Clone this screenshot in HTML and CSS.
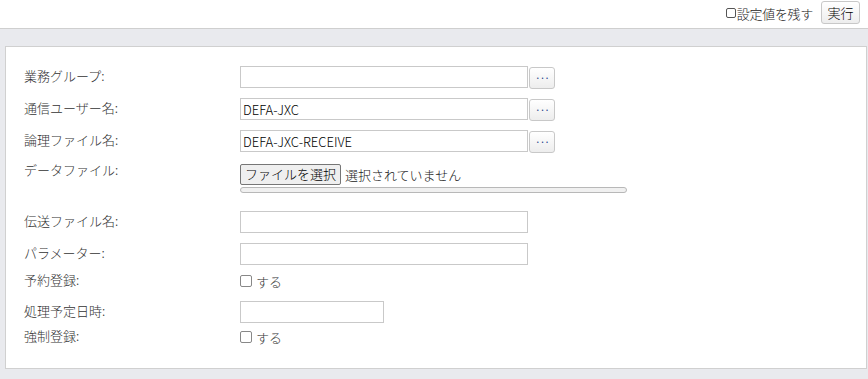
FILE: index.html
```html
<!DOCTYPE html>
<html lang="ja">
<head>
<meta charset="utf-8">
<link rel="stylesheet" href="styles.css">
</head>
<body>
<div class="topbar">
  <label class="keep"><input type="checkbox" class="cb-small">設定値を残す</label>
  <button class="btn run">実行</button>
</div>
<div class="main">
  <div class="panel">
    <div class="row">
      <div class="label">業務グループ:</div>
      <div class="field"><input class="text wide" type="text" value=""><button class="btn dots">···</button></div>
    </div>
    <div class="row">
      <div class="label">通信ユーザー名:</div>
      <div class="field"><input class="text wide" type="text" value="DEFA-JXC"><button class="btn dots">···</button></div>
    </div>
    <div class="row">
      <div class="label">論理ファイル名:</div>
      <div class="field"><input class="text wide" type="text" value="DEFA-JXC-RECEIVE"><button class="btn dots">···</button></div>
    </div>
    <div class="row file-row">
      <div class="label">データファイル:</div>
      <div class="filefield">
        <div class="fileline"><span class="filebtn">ファイルを選択</span><span class="filename">選択されていません</span></div>
        <div class="progress"></div>
      </div>
    </div>
    <div class="row">
      <div class="label">伝送ファイル名:</div>
      <div class="field"><input class="text wide" type="text" value=""></div>
    </div>
    <div class="row r6">
      <div class="label">パラメーター:</div>
      <div class="field"><input class="text wide" type="text" value=""></div>
    </div>
    <div class="row check-row">
      <div class="label">予約登録:</div>
      <label class="check"><input type="checkbox" class="cb">する</label>
    </div>
    <div class="row r8">
      <div class="label">処理予定日時:</div>
      <div class="field"><input class="text short" type="text" value=""></div>
    </div>
    <div class="row check-row last">
      <div class="label">強制登録:</div>
      <label class="check"><input type="checkbox" class="cb">する</label>
    </div>
  </div>
</div>
</body>
</html>
```
FILE: styles.css
```css
* { box-sizing: border-box; }
html, body { margin: 0; padding: 0; }
body {
  width: 868px;
  height: 379px;
  background: #e9eaee;
  font-family: "Noto Sans CJK JP", "Noto Sans", "Liberation Sans", sans-serif;
  font-size: 13px;
  font-weight: 300;
  color: #333;
  overflow: hidden;
}
.topbar {
  height: 29px;
  background: #fff;
  border-bottom: 1px solid #cfcfcf;
  display: flex;
  justify-content: flex-end;
  align-items: flex-start;
  padding: 1px 8px 0 0;
}
.keep {
  display: flex;
  align-items: center;
  height: 24px;
  margin-right: 8px;
  color: #222;
  font-size: 13px;
  letter-spacing: -0.3px;
}
.cb-small {
  appearance: none;
  -webkit-appearance: none;
  width: 10px;
  height: 10px;
  margin: 0 1px 0 0;
  border: 1px solid #555;
  border-radius: 2px;
  background: #fff;
}
.btn {
  font-family: inherit;
  font-weight: 300;
  border: 1px solid #c8c8c8;
  border-radius: 3px;
  background: linear-gradient(#ffffff, #ededed);
  color: #000;
  padding: 0;
  margin: 0;
}
.run {
  width: 39px;
  height: 23px;
  font-size: 13px;
  line-height: 20px;
}
.main {
  padding: 17px 1px 10px 5px;
}
.panel {
  background: #fff;
  border: 1px solid #d0d0d0;
  height: 323px;
  padding: 19px 0 0 18px;
}
.row {
  display: grid;
  grid-template-columns: 216px 1fr;
  align-items: center;
  height: 22px;
  margin-bottom: 10px;
}
.label {
  color: #333;
  line-height: 18px;
  margin-top: -3px;
}
.field {
  display: flex;
  align-items: flex-start;
  height: 22px;
}
.text {
  height: 22px;
  border: 1px solid #c9c9c9;
  padding: 0 2px;
  font-family: inherit;
  font-size: 13px;
  font-weight: 300;
  color: #000;
  outline: none;
  margin: 0;
  background: #fff;
}
.wide { width: 288px; }
.short { width: 144px; }
.dots {
  width: 26px;
  height: 22px;
  margin: 1px 0 0 1px;
  font-size: 10px;
  font-weight: 400;
  line-height: 18px;
  color: #1a3e8a;
  letter-spacing: -1px;
}
.file-row {
  height: 39px;
  align-items: start;
}
.file-row .label { margin-top: 0; line-height: 16px; }
.filefield { display: flex; flex-direction: column; }
.fileline { display: flex; align-items: center; height: 23px; margin-top: 1px; }
.filebtn {
  display: inline-block;
  height: 21px;
  width: 101px;
  border: 1px solid #767676;
  border-radius: 2px;
  background: #efefef;
  color: #000;
  font-size: 13px;
  line-height: 18px;
  text-align: center;
}
.filename { margin-left: 4px; color: #222; }
.progress {
  width: 387px;
  height: 6px;
  margin-top: 1px;
  border: 1px solid #b8b8b8;
  border-radius: 4px;
  background: #f0f0f0;
}
.r6 { margin-bottom: 6px; }
.check-row { height: 20px; }
.check {
  display: flex;
  align-items: center;
  color: #333;
}
.cb {
  appearance: none;
  -webkit-appearance: none;
  width: 12px;
  height: 12px;
  margin: 0 4px 0 0;
  border: 1px solid #888;
  border-radius: 2px;
  background: #fff;
}
.r8 { margin-bottom: 4px; }
.last { margin-bottom: 0; }
```
